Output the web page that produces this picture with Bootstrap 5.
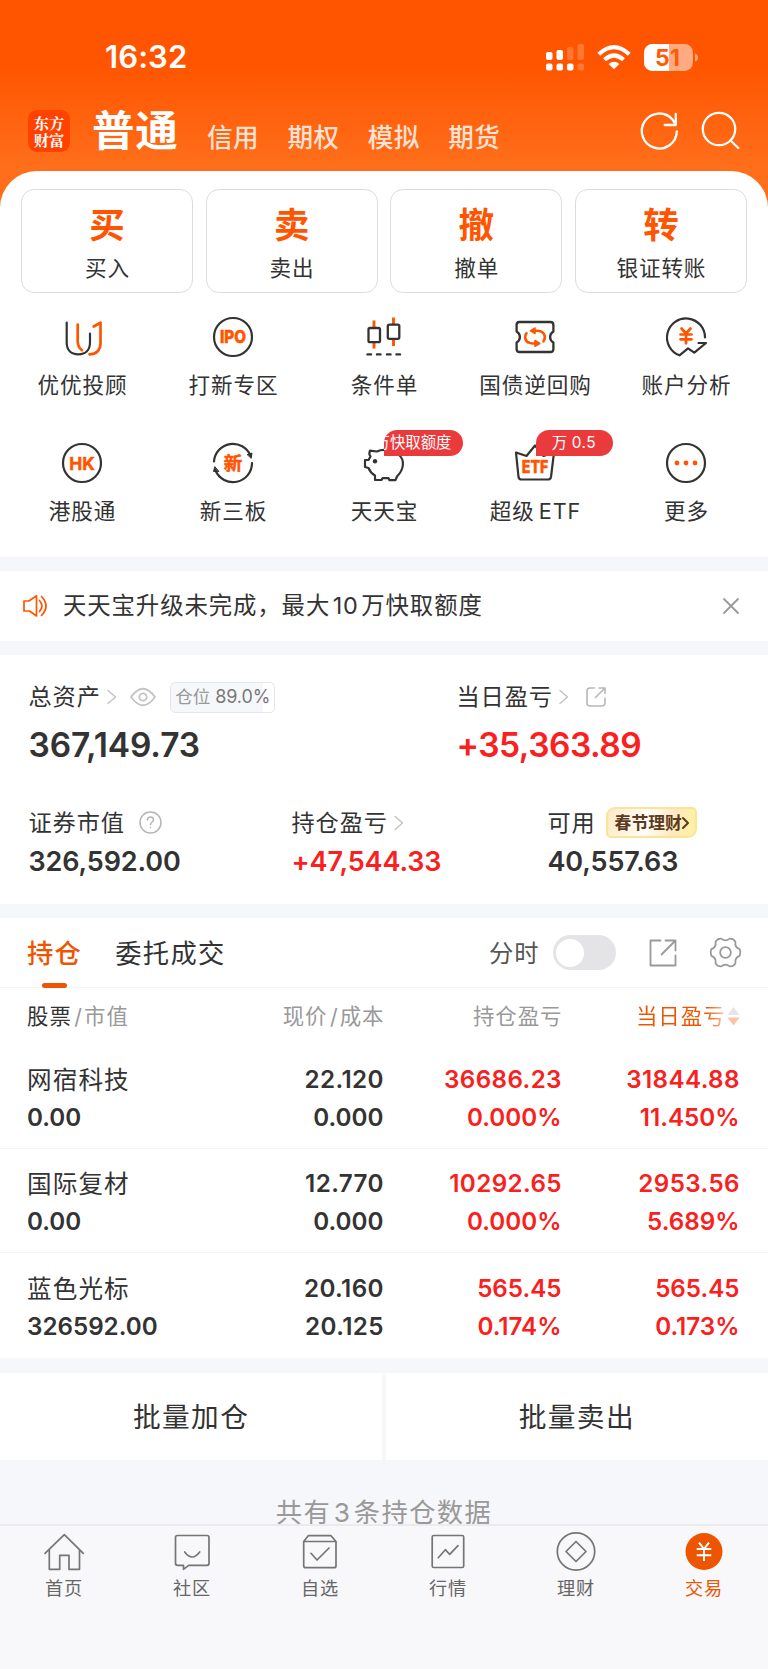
<!DOCTYPE html>
<html lang="zh-CN">
<head>
<meta charset="utf-8">
<meta name="viewport" content="width=device-width, initial-scale=1">
<title>交易</title>
<link href="https://cdn.jsdelivr.net/npm/bootstrap@5.3.0/dist/css/bootstrap.min.css" rel="stylesheet">
<style>
  :root { --or: #ff5500; --or2: #ee5500; --ink: #333; --up: #fa2020; --gap: #f6f7fa; }
  body { font-family: Inter, "Noto Sans CJK SC", sans-serif; color: var(--ink); background: var(--gap); width: 768px; height: 1669px; overflow: hidden; margin: 0; }
  svg { display: block; flex: none; overflow: visible; fill: none; stroke-linecap: round; stroke-linejoin: round; }
  svg text { stroke: none; font-family: Inter, "Noto Sans CJK SC", sans-serif; }
  .top { height: 209px; background: linear-gradient(#ff5500 0, #ff5500 65px, #ff6e1a 165px); }
  .status { height: 100px; padding: 14px 70px 0 105px; }
  .clock { font-size: 31px; font-weight: 600; letter-spacing: .1px; line-height: 36px; }
  .apps { height: 71px; padding: 10px 29px 0 28px; }
  .logo { width: 42px; height: 42px; border-radius: 9px; background: #ff4200; font: 700 15.3px/17.2px "Noto Serif CJK SC", "Noto Sans CJK SC", sans-serif; }
  .mode-on { font-size: 42.5px; font-weight: 700; line-height: 42px; margin-left: 22px; letter-spacing: .8px; }
  .mode { font-size: 25.6px; font-weight: 500; line-height: 30px; letter-spacing: .4px; margin-left: 28.4px; padding-top: 12.5px; color: rgba(255,255,255,.82); }
  .sheet { margin-top: -38px; height: 386px; border-radius: 37px 37px 0 0; background: #fff; padding-top: 18px; }
  .quick { padding: 0 21px; gap: 12.6px; }
  .qcard { height: 104px; border: 1px solid #dcdcdc; border-radius: 13px; padding-top: 15.5px; }
  .qbig { font-size: 35.5px; font-weight: 700; line-height: 40px; color: var(--or); }
  .qlab, .flab { font-size: 21.6px; line-height: 28px; letter-spacing: .9px; margin-right: -.9px; white-space: nowrap; }
  .qlab { margin-top: 8.500px; }
  .funcs { padding: 21.5px 6.5px 0; display: grid; grid-template-columns: repeat(5, 1fr); grid-auto-rows: 126px; }
  .flab { margin-top: 12px; }
  .lat { margin-left: 4px; }
  .funcs svg text { stroke: var(--or); stroke-width: .5; }
  .tip { position: absolute; height: 26.5px; border-radius: 13px 13px 13px 0; background: #eb3a3c; color: #fff; font-size: 15.4px; line-height: 26.5px; overflow: hidden; white-space: nowrap; top: -11px; }
  .tip-a { left: 21.500px; width: 79px; padding-right: 11px; }
  .tip-b { left: 22.500px; width: 77px; letter-spacing: .5px; }
  .strip { background: #fff; margin-top: 14px; }
  .notice { height: 70px; padding: 0 29px 0 22px; font-size: 23.4px; letter-spacing: .9px; }
  .news { margin-left: 14px; }
  .n10 { margin: 0 2.5px; }
  .assets { height: 249px; padding: 26px 0 0 28.500px; }
  .a2 { display: grid; grid-template-columns: 428px 1fr; }
  .a3 { display: grid; grid-template-columns: 263px 256px 1fr; margin-top: 41.5px; }
  .alab { font-size: 23.2px; line-height: 32px; height: 32px; letter-spacing: .9px; }
  .chev { margin-left: 6.5px; }
  .eye { margin-left: 12.5px; }
  .ext { margin-left: 16.5px; }
  .ask { margin-left: 14px; }
  .big { font-size: 33.5px; font-weight: 600; line-height: 40px; margin-top: 12px; letter-spacing: -.1px; }
  .big.up { letter-spacing: -.5px; }
  .mid { font-size: 27px; font-weight: 600; line-height: 32px; margin-top: 7px; letter-spacing: -.12px; }
  .up { color: var(--up); }
  .pos { width: 105px; height: 31px; margin-left: 14.500px; border: 1.4px solid #e6e7eb; border-radius: 5px; background: linear-gradient(90deg, #f6f7fa 89%, #fff 89%); font-size: 17.6px; letter-spacing: -.1px; color: #999; }
  .pos b { font-weight: 400; color: #777; font-size: 18px; }
  .promo { width: 91px; height: 31px; margin-left: 10.500px; border: 2px solid #fbe49a; border-radius: 9px 5px 9px 5px; background: linear-gradient(100deg, #ffeac8 0, #fffdf8 45%, #ffe9bc 75%, #fff3a0 100%); color: #5c3a22; font-size: 16.8px; font-weight: 700; letter-spacing: 0; }
  .tabs { height: 70px; padding: 0 27.5px 0 27px; border-bottom: 1.5px solid #f4f4f6; }
  .tab { font-size: 26.3px; letter-spacing: 1.3px; line-height: 72px; height: 70px; margin-left: 33px; }
  .tab.on { color: var(--or2); font-weight: 500; position: relative; margin-left: 0; }
  .tab.on::after { content: ""; position: absolute; left: 15px; bottom: 0; width: 25px; height: 5px; border-radius: 3px; background: var(--or2); }
  .mins { font-size: 24.3px; letter-spacing: .9px; color: #555; padding-top: 2px; }
  .sw { width: 63px; height: 35px; border-radius: 18px; background: #e4e4e6; padding: 3.5px; margin-left: 13px; }
  .sw i { display: block; width: 28px; height: 28px; border-radius: 50%; background: #fff; }
  .share { margin-left: 33px; }
  .gear { margin-left: 33px; }
  .grid4 { display: grid; grid-template-columns: 1fr 160px 178px 178px; padding: 0 28.500px 0 27px; text-align: right; }
  .grid4 > :first-child { text-align: left; }
  .thead { height: 56px; line-height: 57px; font-size: 21.4px; letter-spacing: 1px; color: #999; }
  .thead > div { margin-right: -1px; }
  .thead .dark { color: var(--ink); }
  .slash { margin: 0 1px 0 2.500px; }
  .sorted { background: linear-gradient(90deg, var(--or2) 78%, #fbc3a2 99%); -webkit-background-clip: text; color: transparent; }
  .sort { margin: 0 1px 0 1px; }
  .stock { height: 104.5px; border-bottom: 1.4px solid #f4f4f6; padding-top: 16.5px; font-size: 24.2px; font-weight: 600; line-height: 38px; }
  .stock:last-child { border: 0; }
  .px { letter-spacing: .4px; margin-right: -.4px; }
  .nm { font-size: 24.6px; font-weight: 400; letter-spacing: 1.1px; }
  .bulk { margin-top: 15px; height: 87px; gap: 3.5px; font-size: 27.7px; letter-spacing: 1.4px; }
  .bulk > div { background: #fff; flex: 1 1 0; padding-top: 3px; }
  .total { height: 64px; padding-top: 36px; line-height: 34px; font-size: 26.3px; letter-spacing: 1.4px; color: #999; overflow: hidden; }
  .bar { height: 146px; background: #f8f8fb; border-top: 2px solid #ebebee; position: relative; display: grid; grid-template-columns: repeat(6, 1fr); font-size: 18.2px; letter-spacing: .9px; line-height: 24px; color: #666; padding-top: 3.500px; }
  .bar svg { stroke: #757575; stroke-width: 1.7; margin-bottom: 3px; }
  .bar .active { color: var(--or2); }
</style>
</head>
<body>
<header class="top text-white">
  <div class="status d-flex align-items-center justify-content-between">
    <div class="clock">16:32</div>
    <svg width="153" height="28" viewBox="544 42 153 28" fill="#fff">
      <g fill="#fff"><rect x="545" y="51" width="6.5" height="8" rx="2"/><rect x="545" y="62.5" width="6.5" height="7" rx="2"/><rect x="555.5" y="49" width="6.5" height="10" rx="2"/><rect x="555.5" y="62.5" width="6.5" height="7" rx="2"/><rect x="566" y="62.5" width="6.5" height="7" rx="2"/>
      <g opacity=".2"><rect x="566" y="46" width="6.5" height="13" rx="2"/><rect x="576.5" y="43" width="6.5" height="16" rx="2"/><rect x="576.5" y="62.5" width="6.5" height="7" rx="2"/></g>
      <path d="M613 68.3 607.6 62.9Q613 58.6 618.4 62.9Z"/></g>
      <path d="M597.800 53.300Q613 39 628.200 53.300M603.500 58.800Q613 50.200 622.500 58.800" stroke="#fff" stroke-width="4.200" stroke-linecap="butt"/>
      <rect x="643" y="43" width="49" height="27" rx="8.500" fill="#fff" opacity=".5"/>
      <path d="M668 43H651.500A8.500 8.500 0 0 0 643 51.500V61.500A8.500 8.500 0 0 0 651.500 70H668Z" fill="#fff"/>
      <path d="M694 52.500Q697 53.500 697 56.500T694 60.500Z" fill="#fff" opacity=".5"/>
      <text x="666.500" y="64.700" font-size="23" font-weight="700" text-anchor="middle" fill="#ff5a08" textLength="25">51</text>
    </svg>
  </div>
  <div class="apps d-flex align-items-start">
    <div class="logo d-flex flex-column align-items-center justify-content-center"><span>东方</span><span>财富</span></div>
    <div class="mode-on">普通</div>
    <div class="mode">信用</div><div class="mode">期权</div><div class="mode">模拟</div><div class="mode">期货</div>
    <svg class="ms-auto" width="98" height="40" viewBox="640 110 98 40" stroke="#fff" stroke-width="2.300" stroke-linecap="butt" stroke-linejoin="miter">
      <path d="M675.800 131.500A17.500 17.500 0 1 1 671.500 119.500L674.500 124M663.700 125H674.800V114"/>
      <circle cx="718" cy="129" r="16.200"/><path d="M729.500 140.500 737.300 148"/>
    </svg>
  </div>
</header>

<main>
<section class="sheet">
  <div class="quick d-flex text-center">
    <div class="qcard flex-fill w-100"><div class="qbig">买</div><div class="qlab">买入</div></div>
    <div class="qcard flex-fill w-100"><div class="qbig">卖</div><div class="qlab">卖出</div></div>
    <div class="qcard flex-fill w-100"><div class="qbig">撤</div><div class="qlab">撤单</div></div>
    <div class="qcard flex-fill w-100"><div class="qbig">转</div><div class="qlab">银证转账</div></div>
  </div>
  <div class="funcs">
    <div class="d-flex flex-column align-items-center">
      <svg width="44" height="44" viewBox="-22 -22 44 44" stroke="#333" stroke-width="2.200"><path d="M-15.300-14.500V5.500C-15.300 13-11 17.300-3.700 17.300S8 13 8 5.500V-3.500"/><path stroke="#ff5500" d="M-4.300-12.500V4Q-4.300 10 0 13.300M11.700-10.500 18.500-14.300V6C18.500 13.500 14 17.300 7.500 17.300" stroke-width="2.700"/></svg>
      <div class="flab">优优投顾</div>
    </div>
    <div class="d-flex flex-column align-items-center">
      <svg width="44" height="44" viewBox="-22 -22 44 44" stroke="#333" stroke-width="2.200"><circle r="19"/><text y="6.300" font-size="17" font-weight="800" text-anchor="middle" fill="#ff5500" textLength="26" lengthAdjust="spacingAndGlyphs">IPO</text></svg>
      <div class="flab">打新专区</div>
    </div>
    <div class="d-flex flex-column align-items-center">
      <svg width="44" height="44" viewBox="-22 -22 44 44" stroke="#333" stroke-width="2.300"><path stroke="#ff5500" stroke-width="2.900" stroke-linecap="butt" d="M-10-16.500V-10M-10 5.500V11.500M9.500-19.500V-13M9.500 2V9"/><rect x="-15.500" y="-9" width="11.500" height="14.200" rx="1.500"/><rect x="3.800" y="-12.400" width="11.500" height="14.200" rx="1.500"/><path d="M-16.500 17.400H-13M-7 17.400H-3.500M3 17.400H6.500M12.500 17.400H16" stroke-width="2.400"/></svg>
      <div class="flab">条件单</div>
    </div>
    <div class="d-flex flex-column align-items-center">
      <svg width="44" height="44" viewBox="-22 -22 44 44" stroke="#333" stroke-width="2.300"><path d="M-15.500-15H15.500Q18.400-15 18.400-12V-5.500C14-3 14 3 18.400 5.500V12Q18.400 15 15.500 15H-15.500Q-18.400 15-18.400 12V5.500C-14 3-14-3-18.400-5.500V-12Q-18.400-15-15.500-15Z"/><g stroke="#ff5500" stroke-width="2.600"><path d="M-7 5.500C-11.500 2.500-9.500-3-8.500-3.800M-3-6.200H2C9-6.200 11.500-1 8.500 4.300M3 6.500H-2Q-5 6.500-7 5"/><path fill="#ff5500" stroke-width="1.500" d="M-4.500-6.200 0-9V-3.400ZM4.800 6.500 0 3.500V9.300Z"/></g></svg>
      <div class="flab">国债逆回购</div>
    </div>
    <div class="d-flex flex-column align-items-center">
      <svg width="44" height="44" viewBox="-22 -22 44 44" stroke="#333" stroke-width="2.200"><path d="M19 .5A19 19 0 1 0-6.500 18.300L2 11.300 8.300 15.700 20 6H12.500" stroke-linejoin="round"/><path stroke="#ff5500" stroke-width="2.700" d="M-4.500-8.500 0-3.500 4.500-8.500M0-3V6.300M-5.500-2.500H5.500M-5.500 2.300H5.500"/></svg>
      <div class="flab">账户分析</div>
    </div>
    <div class="d-flex flex-column align-items-center">
      <svg width="44" height="44" viewBox="-22 -22 44 44" stroke="#333" stroke-width="2.200"><circle r="19"/><text y="6.500" font-size="17.500" font-weight="700" text-anchor="middle" fill="#ff5500" textLength="25.500" lengthAdjust="spacingAndGlyphs">HK</text></svg>
      <div class="flab">港股通</div>
    </div>
    <div class="d-flex flex-column align-items-center">
      <svg width="44" height="44" viewBox="-22 -22 44 44" stroke="#333" stroke-width="2.200"><path d="M-19-1.500A19 19 0 0 1 17.500-7.500M19 0A19 19 0 0 1-17.500 7.500"/><path fill="#333" stroke-width="1" d="M14.500-8.500 19-10 18.300-5ZM-14.500 8.500-19.500 8.500-18.300 4Z"/><text y="6.700" font-size="18.500" font-weight="700" text-anchor="middle" fill="#ff5500">新</text></svg>
      <div class="flab">新三板</div>
    </div>
    <div class="d-flex flex-column align-items-center">
      <div class="position-relative">
        <svg width="44" height="44" viewBox="-22 -22 44 44" stroke="#333" stroke-width="2.200"><path d="M5-12.500Q-2-14-7-11.500L-14-12.300Q-15.500-9-13.500-6.500L-15.500-3H-19V4L-15.500 5Q-13.500 10-9 12.500V17H-2.500L-1.500 15.200H4.500L5.500 17.200H11.500L13 13.500C20 6.500 21-3 15-8"/><circle cx="-9" cy="-1.800" r="2.200" fill="#333" stroke="none"/></svg>
        <div class="tip tip-a d-flex justify-content-end">万快取额度</div>
      </div>
      <div class="flab">天天宝</div>
    </div>
    <div class="d-flex flex-column align-items-center">
      <div class="position-relative">
        <svg width="44" height="44" viewBox="-22 -22 44 44" stroke="#333" stroke-width="2.200"><path d="M-19-10.500-8.500-7 0-17.500 8.500-7 19-10.500 16 14Q15.500 16.500 13 16.500H-13.500Q-16 16.500-16.500 14Z"/><text y="9.800" font-size="17" font-weight="800" text-anchor="middle" fill="#ff5500" textLength="26.500" lengthAdjust="spacingAndGlyphs">ETF</text></svg>
        <div class="tip tip-b text-center">万<span class="ms-1">0.5</span></div>
      </div>
      <div class="flab">超级<span class="lat">ETF</span></div>
    </div>
    <div class="d-flex flex-column align-items-center">
      <svg width="44" height="44" viewBox="-22 -22 44 44" stroke="#333" stroke-width="2.200"><circle r="19"/><g fill="#ff5500" stroke="none"><circle cx="-9" r="2.400"/><circle r="2.400"/><circle cx="9" r="2.400"/></g></svg>
      <div class="flab">更多</div>
    </div>
  </div>
</section>

<section class="strip notice d-flex align-items-center">
  <svg width="27" height="24" viewBox="0 0 27 24" stroke="#ff5500" stroke-width="1.700"><path d="M2 7H7L14.500 1.800V22L7.500 17H2Z"/><path d="M17.500 6.500Q22.500 12 17.500 17.500M19.500 2.500Q28.500 12 19.500 21.500"/></svg>
  <div class="news">天天宝升级未完成，最大<span class="n10">10</span>万快取额度</div>
  <svg class="ms-auto" width="16" height="16" viewBox="0 0 16 16" stroke="#999" stroke-width="1.800"><path d="M1 1 15 15M15 1 1 15"/></svg>
</section>

<section class="strip assets">
  <div class="a2">
    <div>
      <div class="alab d-flex align-items-center">总资产
        <svg class="chev" width="10" height="14" viewBox="0 0 10 14" stroke="#c4c4c4" stroke-width="1.500"><path d="M1 .5 8.500 7 1 13.500"/></svg>
        <svg class="eye" width="26" height="18" viewBox="0 0 26 18" stroke="#c4c4c4" stroke-width="1.800"><path d="M1 9Q13-7.500 25 9 13 25.500 1 9Z"/><circle cx="13" cy="9" r="3.700"/></svg>
        <span class="pos d-flex align-items-center justify-content-center"><span>仓位 <b>89.0%</b></span></span>
      </div>
      <div class="big">367,149.73</div>
    </div>
    <div>
      <div class="alab d-flex align-items-center">当日盈亏
        <svg class="chev" width="10" height="14" viewBox="0 0 10 14" stroke="#c4c4c4" stroke-width="1.500"><path d="M1 .5 8.500 7 1 13.500"/></svg>
        <svg class="ext" width="20" height="20" viewBox="0 0 20 20" stroke="#b8b8b8" stroke-width="1.600"><path d="M8.500 1H4Q1 1 1 4V16Q1 19 4 19H16Q19 19 19 16V11M13 1H19V6.500M19 1 9.500 10.500"/></svg>
      </div>
      <div class="big up">+35,363.89</div>
    </div>
  </div>
  <div class="a3">
    <div>
      <div class="alab d-flex align-items-center">证券市值
        <svg class="ask" width="23" height="23" viewBox="0 0 23 23" stroke="#b5b5b5" stroke-width="1.500"><circle cx="11.500" cy="11.500" r="10.500"/><path d="M8.500 9Q8.500 6 11.500 6T14.500 8.800C14.500 11 11.500 11 11.500 13.800M11.500 16.500V16.800"/></svg>
      </div>
      <div class="mid">326,592.00</div>
    </div>
    <div>
      <div class="alab d-flex align-items-center">持仓盈亏
        <svg class="chev" width="10" height="14" viewBox="0 0 10 14" stroke="#c4c4c4" stroke-width="1.500"><path d="M1 .5 8.500 7 1 13.500"/></svg>
      </div>
      <div class="mid up">+47,544.33</div>
    </div>
    <div>
      <div class="alab d-flex align-items-center">可用
        <span class="promo d-flex align-items-center justify-content-center">春节理财<svg width="7" height="12" viewBox="0 0 7 12" stroke="#5c3a22" stroke-width="2"><path d="M1 1 6 6 1 11"/></svg></span>
      </div>
      <div class="mid">40,557.63</div>
    </div>
  </div>
</section>

<section class="strip">
  <div class="tabs d-flex align-items-center">
    <div class="tab on">持仓</div>
    <div class="tab">委托成交</div>
    <div class="ms-auto d-flex align-items-center">
      <span class="mins">分时</span>
      <span class="sw"><i></i></span>
      <svg class="share" width="28" height="28" viewBox="0 0 28 28" stroke="#999" stroke-width="1.800" stroke-linecap="butt" stroke-linejoin="miter"><path d="M11.500 1.500H1.500V26.500H26.500V16.500M16.500 1.500H26.500V11.500M26.500 1.500 12.500 15.500"/></svg>
      <svg class="gear" width="31" height="31" viewBox="-16.500 -16.500 33 33" stroke="#999" stroke-width="1.900"><circle r="5.700"/><path d="M15.100-3.500Q16.800 0 15.100 3.500 9.500 5.500 10.600 11.300 8.700 15.200 4.500 14.800 0 11-4.500 14.800-8.700 15.200-10.600 11.300-9.500 5.500-15.100 3.500-16.800 0-15.100-3.500-9.500-5.500-10.600-11.300-8.700-15.200-4.500-14.800 0-11 4.500-14.800 8.700-15.200 10.600-11.300 9.500-5.500 15.100-3.500Z"/></svg>
    </div>
  </div>
  <div class="thead grid4">
    <div><span class="dark">股票</span><span class="slash">/</span>市值</div>
    <div>现价<span class="slash">/</span>成本</div>
    <div>持仓盈亏</div>
    <div class="d-flex justify-content-end align-items-center"><span class="sorted">当日盈亏</span><svg class="sort" width="13" height="19" viewBox="0 0 13 19"><path d="M6.500 0 12.500 8H.5Z" fill="#e6e6e8"/><path d="M6.500 18.500 12.500 10.500H.5Z" fill="#fbc3a5"/></svg></div>
  </div>
  <div>
    <div class="stock grid4">
      <div><div class="nm">网宿科技</div>0.00</div><div><div class="px">22.120</div>0.000</div><div class="up"><div class="px">36686.23</div>0.000%</div><div class="up"><div class="px">31844.88</div>11.450%</div>
    </div>
    <div class="stock grid4">
      <div><div class="nm">国际复材</div>0.00</div><div><div class="px">12.770</div>0.000</div><div class="up"><div class="px">10292.65</div>0.000%</div><div class="up"><div class="px">2953.56</div>5.689%</div>
    </div>
    <div class="stock grid4">
      <div><div class="nm">蓝色光标</div>326592.00</div><div><div class="px">20.160</div><div class="px">20.125</div></div><div class="up">565.45<br>0.174%</div><div class="up">565.45<br>0.173%</div>
    </div>
  </div>
</section>

<section class="bulk d-flex">
  <div class="d-flex align-items-center justify-content-center">批量加仓</div>
  <div class="d-flex align-items-center justify-content-center">批量卖出</div>
</section>
<div class="total text-center">共有<span class="n10">3</span>条持仓数据</div>
</main>

<nav class="bar">
  <div class="d-flex flex-column align-items-center"><svg width="44" height="44" viewBox="-22 -22 44 44"><path d="M-19 2.300 .3-16.300 19.300 2.300M-14.700-1.500V18.300H-4.300V4.300H5V18.300H15.500V-1.500"/></svg>首页</div>
  <div class="d-flex flex-column align-items-center"><svg width="44" height="44" viewBox="-22 -22 44 44"><path d="M-14.500-15.500H15Q17-15.500 17-13.500V12.300Q17 14.300 15 14.300H-3.300L-8.500 18.300V14.300H-14.500Q-16.500 14.300-16.500 12.300V-13.500Q-16.500-15.500-14.500-15.500ZM-7.300 1Q0 11 7.700 1"/></svg>社区</div>
  <div class="d-flex flex-column align-items-center"><svg width="44" height="44" viewBox="-22 -22 44 44"><path d="M-16.300-9.500H16V14.700Q16 16.700 14 16.700H-14.300Q-16.300 16.700-16.300 14.700ZM-16.300-9.500-11.700-15.300H11L16-9.500M-9 2.300-3 9 9-3"/></svg>自选</div>
  <div class="d-flex flex-column align-items-center"><svg width="44" height="44" viewBox="-22 -22 44 44"><rect x="-15.800" y="-15.500" width="31.500" height="32" rx="1.500"/><path d="M-9.700 6.700-2.700-1.300 1.700 3.300 10-5.300"/></svg>行情</div>
  <div class="d-flex flex-column align-items-center"><svg width="44" height="44" viewBox="-22 -22 44 44"><circle cy=".5" r="18.700"/><path d="M0-9.500 10 .5 0 10.500-10 .5Z"/></svg>理财</div>
  <div class="d-flex flex-column align-items-center active"><svg width="44" height="44" viewBox="-22 -22 44 44"><circle cy=".5" r="18.500" fill="#ee5500" stroke="none"/><path stroke="#fff" stroke-width="2" stroke-linecap="butt" d="M-5-8.300 0-2 5-8.300M0-2V10M-7.300-2H7.300M-7.300 4.200H7.300"/></svg>交易</div>
</nav>
<script src="https://cdn.jsdelivr.net/npm/bootstrap@5.3.0/dist/js/bootstrap.bundle.min.js"></script>
</body>
</html>
